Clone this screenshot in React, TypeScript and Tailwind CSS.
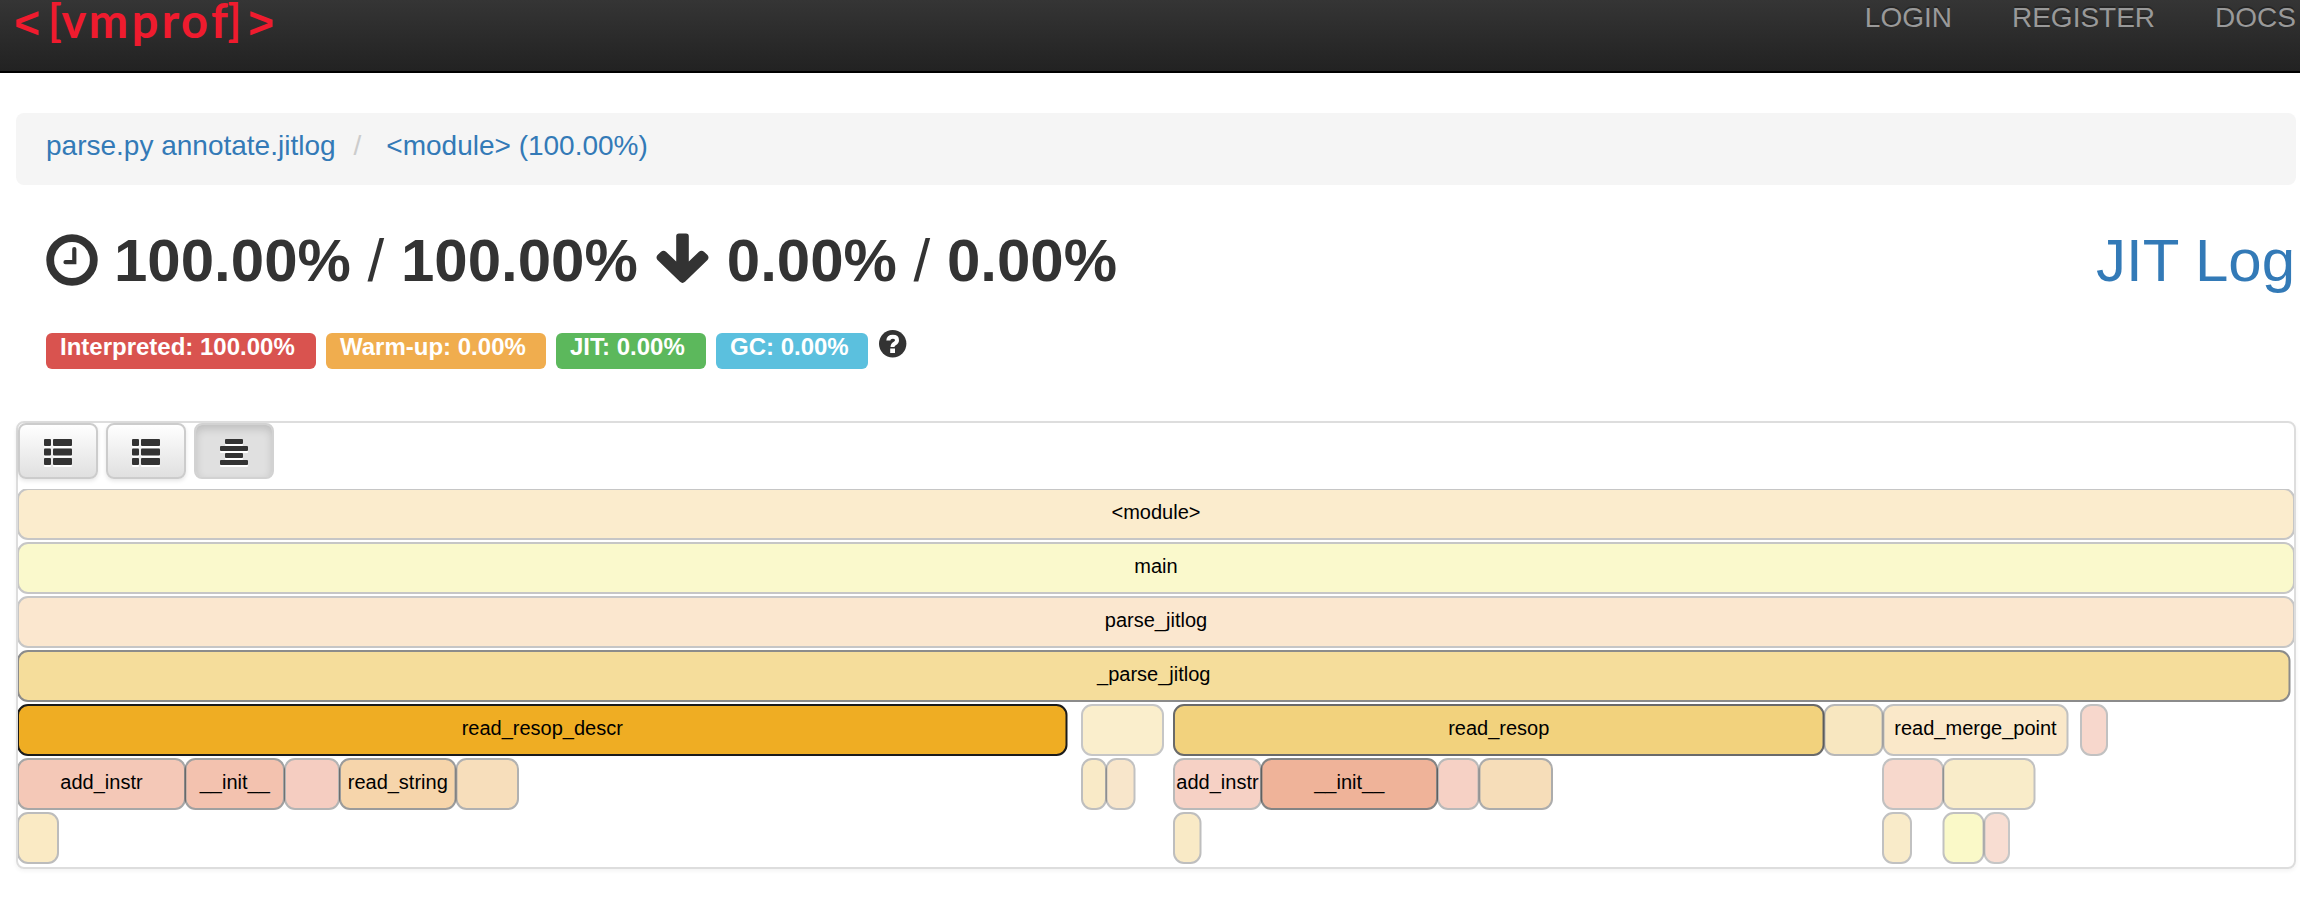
type Frame = {
  row: number;
  x: number;
  w: number;
  fill: string;
  opacity: number;
  label?: string;
};

const frames: Frame[] = [
  { row: 0, x: 18, w: 2276, fill: "#f1aa20", opacity: 0.22, label: "<module>" },
  { row: 1, x: 18, w: 2276, fill: "#ece61a", opacity: 0.22, label: "main" },
  { row: 2, x: 18, w: 2276, fill: "#ee9428", opacity: 0.22, label: "parse_jitlog" },
  { row: 3, x: 18, w: 2271.5, fill: "#eab424", opacity: 0.45, label: "_parse_jitlog" },
  { row: 4, x: 18, w: 1048.5, fill: "#eea309", opacity: 0.89, label: "read_resop_descr" },
  { row: 4, x: 1082, w: 81, fill: "#ebb41c", opacity: 0.22 },
  { row: 4, x: 1174, w: 649.5, fill: "#eab220", opacity: 0.58, label: "read_resop" },
  { row: 4, x: 1824.5, w: 58, fill: "#e9ad22", opacity: 0.28 },
  { row: 4, x: 1883.5, w: 184, fill: "#eba422", opacity: 0.24, label: "read_merge_point" },
  { row: 4, x: 2081, w: 26, fill: "#e25c30", opacity: 0.24 },
  { row: 5, x: 18, w: 167, fill: "#e06030", opacity: 0.34, label: "add_instr" },
  { row: 5, x: 185.5, w: 98.5, fill: "#e05c2a", opacity: 0.37, label: "__init__" },
  { row: 5, x: 285, w: 54, fill: "#e0562c", opacity: 0.29 },
  { row: 5, x: 340, w: 115.5, fill: "#e89628", opacity: 0.39, label: "read_string" },
  { row: 5, x: 456.5, w: 61.5, fill: "#e69422", opacity: 0.3 },
  { row: 5, x: 1082, w: 24, fill: "#eaae26", opacity: 0.25 },
  { row: 5, x: 1106.5, w: 28, fill: "#e69a2c", opacity: 0.24 },
  { row: 5, x: 1174, w: 87, fill: "#e05a2e", opacity: 0.27, label: "add_instr" },
  { row: 5, x: 1261.5, w: 175.5, fill: "#de622c", opacity: 0.48, label: "__init__" },
  { row: 5, x: 1438, w: 40.5, fill: "#e05a2e", opacity: 0.27 },
  { row: 5, x: 1479.5, w: 72.5, fill: "#e69828", opacity: 0.32 },
  { row: 5, x: 1883, w: 60, fill: "#e06030", opacity: 0.24 },
  { row: 5, x: 1943.5, w: 91, fill: "#eab324", opacity: 0.24 },
  { row: 6, x: 18, w: 40, fill: "#edb220", opacity: 0.26 },
  { row: 6, x: 1174, w: 26.5, fill: "#eaae22", opacity: 0.25 },
  { row: 6, x: 1883, w: 28, fill: "#eaae24", opacity: 0.24 },
  { row: 6, x: 1943.5, w: 40, fill: "#ece81c", opacity: 0.24 },
  { row: 6, x: 1984.5, w: 24.5, fill: "#e46838", opacity: 0.22 },
];

const navItems = ["LOGIN", "REGISTER", "DOCS"];

function Navbar() {
  const chevron = "font-['Liberation_Sans',sans-serif] text-[44px]";
  return (
    <header className="flex h-[73px] justify-between border-b-2 border-black bg-gradient-to-b from-[#353535] to-[#222222] pr-[4px]">
      <svg
        width="290"
        height="70"
        viewBox="0 0 290 70"
        aria-label="vmprof"
        className="overflow-visible fill-[#ef1b2e] font-['Lato',sans-serif] font-bold"
      >
        <text y="37.5" textAnchor="middle" className="text-[47px]">
          <tspan x="27" y="38" className={chevron}>&lt;</tspan>
          <tspan x="55" y="36" className="text-[44px]">[</tspan>
          <tspan x="74 108.500 145 170.500 194.500 219.500" y="37.500">vmprof</tspan>
          <tspan x="234.500" y="36" className="text-[44px]">]</tspan>
          <tspan x="261" y="38" className={chevron}>&gt;</tspan>
        </text>
      </svg>
      <nav className="flex gap-[60px] text-[28px] leading-[36px] text-[#999999] [text-shadow:0_-2px_0_rgba(0,0,0,0.25)]">
        {navItems.map((n) => (
          <a key={n}>{n}</a>
        ))}
      </nav>
    </header>
  );
}

function ClockIcon() {
  return (
    <svg width="52" height="52" viewBox="0 0 52 52" className="mt-[2px] shrink-0">
      <circle cx="26" cy="26" r="21.8" fill="none" stroke="#333" strokeWidth="7.8" />
      <path d="M28.300 15V28.200H19.500" fill="none" stroke="#333" strokeWidth="4.2" strokeLinecap="round" />
    </svg>
  );
}

function ArrowIcon() {
  return (
    <svg width="54" height="52" viewBox="0 0 54 52" className="shrink-0">
      <path
        d="M23 0.500h7q2.800 0 2.800 2.800V28.500L43 18.700Q45.500 16.800 48 18.700L51.500 22Q53.500 24.500 51.500 27L29 48.800Q26.500 51 24 48.800L1.500 27Q-0.500 24.500 1.500 22L5 18.700Q7.500 16.800 10 18.700L20.200 28.500V3.300q0-2.800 2.800-2.800z"
        fill="#333"
      />
    </svg>
  );
}

function Summary() {
  return (
    <div className="mt-[43px] flex h-[66px] items-start pr-[5px] pl-[46px] text-[60px] leading-[66px] text-[#333333]">
      <div className="flex pt-[4px]">
        <ClockIcon />
      </div>
      <span className="ml-[16px] whitespace-pre">
        <b>100.00%</b> / <b>100.00%</b>
      </span>
      <div className="ml-[18px] flex pt-[5px]">
        <ArrowIcon />
      </div>
      <span className="ml-[17px] whitespace-pre">
        <b>0.00%</b> / <b>0.00%</b>
      </span>
      <a className="ml-auto text-[#337ab7]">JIT Log</a>
    </div>
  );
}

function Labels() {
  const base = "h-9 rounded-[6px] pl-[14px] text-[24px] leading-[28px] font-bold text-white";
  return (
    <div className="mt-[39px] flex gap-[10px] pl-[46px]">
      <span className={`${base} w-[270px] bg-[#d9534f]`}>Interpreted: 100.00%</span>
      <span className={`${base} w-[220px] bg-[#f0ad4e]`}>Warm-up: 0.00%</span>
      <span className={`${base} w-[150px] bg-[#5cb85c]`}>JIT: 0.00%</span>
      <span className={`${base} w-[152px] bg-[#5bc0de]`}>GC: 0.00%</span>
      <svg width="28" height="28" viewBox="0 0 28 28" className="-mt-[3px] ml-px">
        <circle cx="13.700" cy="13.700" r="13.700" fill="#333" />
        <path d="M9.300 10.500Q9.500 6.800 13.800 6.800Q18 6.800 18 10.200Q18 12.200 15.800 13.500Q13.500 14.800 13.500 17" fill="none" stroke="#fff" strokeWidth="4" />
        <rect x="11.200" y="18.500" width="4.800" height="4.500" fill="#fff" />
      </svg>
    </div>
  );
}

function ListIcon() {
  return (
    <svg width="28" height="28" viewBox="0 0 28 28">
      {[0, 9.5, 19].map((y) => (
        <g key={y}>
          <rect x="0" y={y + 2} width="7" height="7" rx="1" fill="#fff" />
          <rect x="9" y={y + 2} width="19" height="7" rx="1" fill="#fff" />
          <rect x="0" y={y} width="7" height="7" rx="1" fill="#333" />
          <rect x="9" y={y} width="19" height="7" rx="1" fill="#333" />
        </g>
      ))}
    </svg>
  );
}

function CenterIcon() {
  return (
    <svg width="28" height="28" viewBox="0 0 28 28">
      {[0, 7, 14, 21].map((y, i) => (
        <g key={y}>
          <rect x={i % 2 ? 0 : 5} y={y + 2} width={i % 2 ? 28 : 18} height="5" rx="1" fill="#fff" />
          <rect x={i % 2 ? 0 : 5} y={y} width={i % 2 ? 28 : 18} height="5" rx="1" fill="#333" />
        </g>
      ))}
    </svg>
  );
}

function Toolbar() {
  const base = "flex h-14 w-20 justify-center rounded-[8px] border-2 pt-[14px]";
  const idle = "border-[#cccccc] bg-gradient-to-b from-white to-[#e0e0e0] shadow-[0_2px_4px_rgba(0,0,0,0.1)]";
  return (
    <div className="flex gap-2">
      <button className={`${base} ${idle}`}>
        <ListIcon />
      </button>
      <button className={`${base} ${idle}`}>
        <ListIcon />
      </button>
      <button className={`${base} border-[#d2d2d2] bg-[#e0e0e0] shadow-[inset_0_4px_8px_rgba(0,0,0,0.15)]`}>
        <CenterIcon />
      </button>
    </div>
  );
}

function FlameGraph() {
  return (
    <svg width="2276" height="378" viewBox="18 489 2276 378" className="mt-[10px] block">
      {frames.map((f, i) => (
        <g key={i}>
          <rect
            x={f.x}
            y={489 + f.row * 54}
            width={f.w}
            height="50"
            rx="10"
            fill={f.fill}
            stroke="#000"
            strokeWidth="2"
            opacity={f.opacity}
          />
          {f.label && (
            <text x={f.x + f.w / 2} y={519 + f.row * 54} textAnchor="middle" className="fill-black text-[20px]">
              {f.label}
            </text>
          )}
        </g>
      ))}
    </svg>
  );
}

export default function App() {
  return (
    <div className="h-[914px] w-[2300px] overflow-hidden bg-white font-['Liberation_Sans',Arial,sans-serif]">
      <Navbar />
      <div className="mt-10 mr-1 ml-4 flex h-[72px] rounded-[8px] bg-[#f5f5f5] pl-[30px] text-[28px] leading-[66px] text-[#337ab7]">
        <a>parse.py annotate.jitlog</a>
        <span className="ml-[18px] text-[#cccccc]">/</span>
        <a className="ml-[25px]">&lt;module&gt; (100.00%)</a>
      </div>
      <Summary />
      <Labels />
      <main className="mt-[52px] mr-1 ml-4 h-[448px] rounded-[8px] border-2 border-[#dddddd] shadow-[0_2px_4px_rgba(0,0,0,0.05)]">
        <Toolbar />
        <FlameGraph />
      </main>
    </div>
  );
}
